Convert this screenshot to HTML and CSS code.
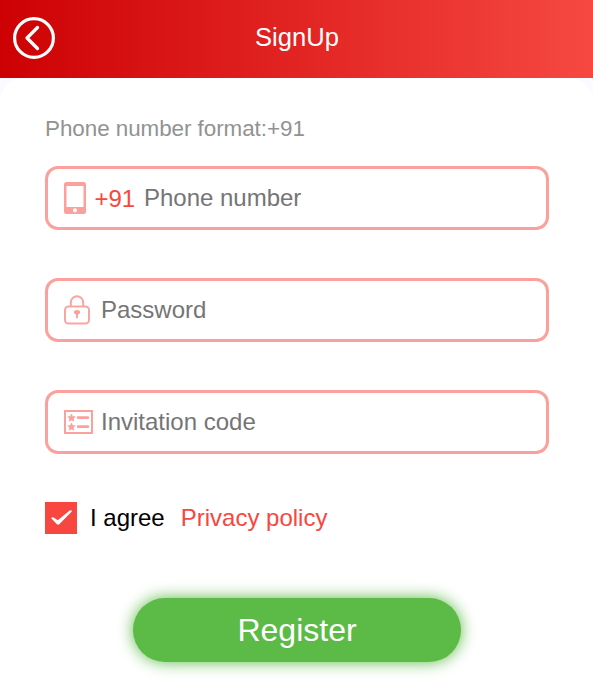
FILE: index.html
```html
<!DOCTYPE html>
<html lang="en">
<head>
<meta charset="utf-8">
<title>SignUp</title>
<link rel="stylesheet" href="styles.css">
</head>
<body>
<header class="topbar">
  <a class="back" aria-label="Back">
    <svg width="42" height="42" viewBox="0 0 42 42" fill="none" stroke="#fff" stroke-linecap="round" stroke-linejoin="round">
      <circle cx="21" cy="21" r="19.4" stroke-width="3.200"/>
      <path d="M24.500 10.500L14 21l10.500 10.500" stroke-width="3.300"/>
    </svg>
  </a>
  <h1 class="title">SignUp</h1>
</header>
<main class="panel">
  <p class="hint">Phone number format:+91</p>
  <label class="field">
    <svg class="icon icon-phone" width="22" height="32" viewBox="0 0 22 32">
      <path fill="#fba09c" fill-rule="evenodd" d="M2.500 0h17A2.500 2.500 0 0 1 22 2.500v27a2.500 2.500 0 0 1-2.500 2.500h-17A2.500 2.500 0 0 1 0 29.500v-27A2.500 2.500 0 0 1 2.500 0zM2.500 4v21h17V4zM11 26.200a2.100 2.100 0 1 0 0 4.200a2.100 2.100 0 0 0 0-4.200z"/>
    </svg>
    <span class="prefix">+91</span>
    <input class="input" type="tel" placeholder="Phone number">
  </label>
  <label class="field">
    <svg class="icon icon-lock" width="26" height="30" viewBox="0 0 26 30" fill="none" stroke="#fba5a1" stroke-width="2">
      <rect x="1" y="11.500" width="24" height="17" rx="3.500"/>
      <path d="M6.800 11V7.500a6.200 6.200 0 0 1 12.400 0V11"/>
      <path d="M13 18v5.300"/>
      <ellipse cx="13" cy="17.300" rx="3" ry="2.200" fill="#fba09c" stroke="none"/>
    </svg>
    <input class="input" type="password" placeholder="Password">
  </label>
  <label class="field">
    <svg class="icon icon-code" width="29" height="24" viewBox="0 0 29 24" fill="none" stroke="#fba09c">
      <rect x="1" y="1" width="27" height="22" stroke-width="2"/>
      <path d="M14.200 7.700h9.600M14.200 16.700h9.600" stroke-width="2.800" stroke-linecap="round"/>
      <path id="star" fill="#fba09c" stroke-width=".6" d="M7.500 4l1.100 2.400 2.600.3-1.900 1.800.5 2.700-2.300-1.300-2.300 1.300.5-2.700-1.900-1.800 2.600-.3z"/>
      <use href="#star" y="9"/>
    </svg>
    <input class="input" type="text" placeholder="Invitation code">
  </label>
  <div class="agree">
    <span class="checkbox">
      <svg width="32" height="32" viewBox="0 0 32 32"><path fill="#fff" d="M6.200 16.300q1.300-1.800 2.800-.6l3.800 2.500L25 8.300q1.800-.5 1.800 1.200L14.500 22q-1.400 1.300-2.800 0z"/></svg>
    </span>
    <span class="agree-text">I agree</span>
    <a class="policy">Privacy policy</a>
  </div>
  <button class="register" type="button">Register</button>
</main>
</body>
</html>
```
FILE: styles.css
```css
* {
  box-sizing: border-box;
}

body {
  margin: 0;
  min-height: 682px;
  background: #f9fbff;
  font-family: "Liberation Sans", Arial, sans-serif;
  overflow: hidden;
}

.topbar {
  display: grid;
  grid-template-columns: 42px 1fr 42px;
  align-items: center;
  height: 78px;
  padding: 0 13px;
  background: linear-gradient(90deg, #cd0103, #f64841);
}

.back {
  display: flex;
  margin-top: -2px;
}

.title {
  margin: -4px 0 0 1px;
  color: #fff;
  font-size: 25.6px;
  font-weight: 400;
  line-height: 32px;
  text-align: center;
}

.panel {
  display: flex;
  flex-direction: column;
  height: 604px;
  padding: 36px 44px 0 45px;
  border-radius: 24px 24px 0 0;
  background: #fff;
}

.hint {
  margin: 0 0 22px;
  color: #929292;
  font-size: 22.4px;
  letter-spacing: -0.04px;
  line-height: 30px;
}

.field {
  display: flex;
  align-items: center;
  height: 64px;
  margin-bottom: 48px;
  padding: 0 16px;
  border: 3px solid #fba09c;
  border-radius: 13px;
}

.icon {
  flex: none;
}

.icon-phone {
  margin-right: 8.5px;
}

.icon-lock {
  margin-right: 11px;
}

.icon-code {
  margin-right: 8px;
}

.prefix {
  margin: 2px 9px 0 0;
  color: #f74740;
  font-size: 24px;
  letter-spacing: -0.1px;
  line-height: 30px;
}

.input {
  flex: 1;
  min-width: 0;
  height: 40px;
  padding: 0;
  border: 0;
  outline: 0;
  background: transparent;
  font: 24px "Liberation Sans", Arial, sans-serif;
}

.input::placeholder {
  color: #757575;
}

.agree {
  display: flex;
  align-items: center;
  height: 32px;
  font-size: 24px;
}

.checkbox {
  display: flex;
  width: 32px;
  height: 32px;
  background: #f74740;
}

.agree-text {
  margin: 0 16px 0 13px;
  color: #000;
}

.policy {
  color: #f74740;
}

.register {
  align-self: center;
  width: 328px;
  height: 64px;
  margin-top: 64px;
  padding: 0;
  border: 0;
  border-radius: 32px;
  background: #5cba47;
  box-shadow: 0 0 16px #5cba47;
  color: #fff;
  font: 32px "Liberation Sans", Arial, sans-serif;
}
```
